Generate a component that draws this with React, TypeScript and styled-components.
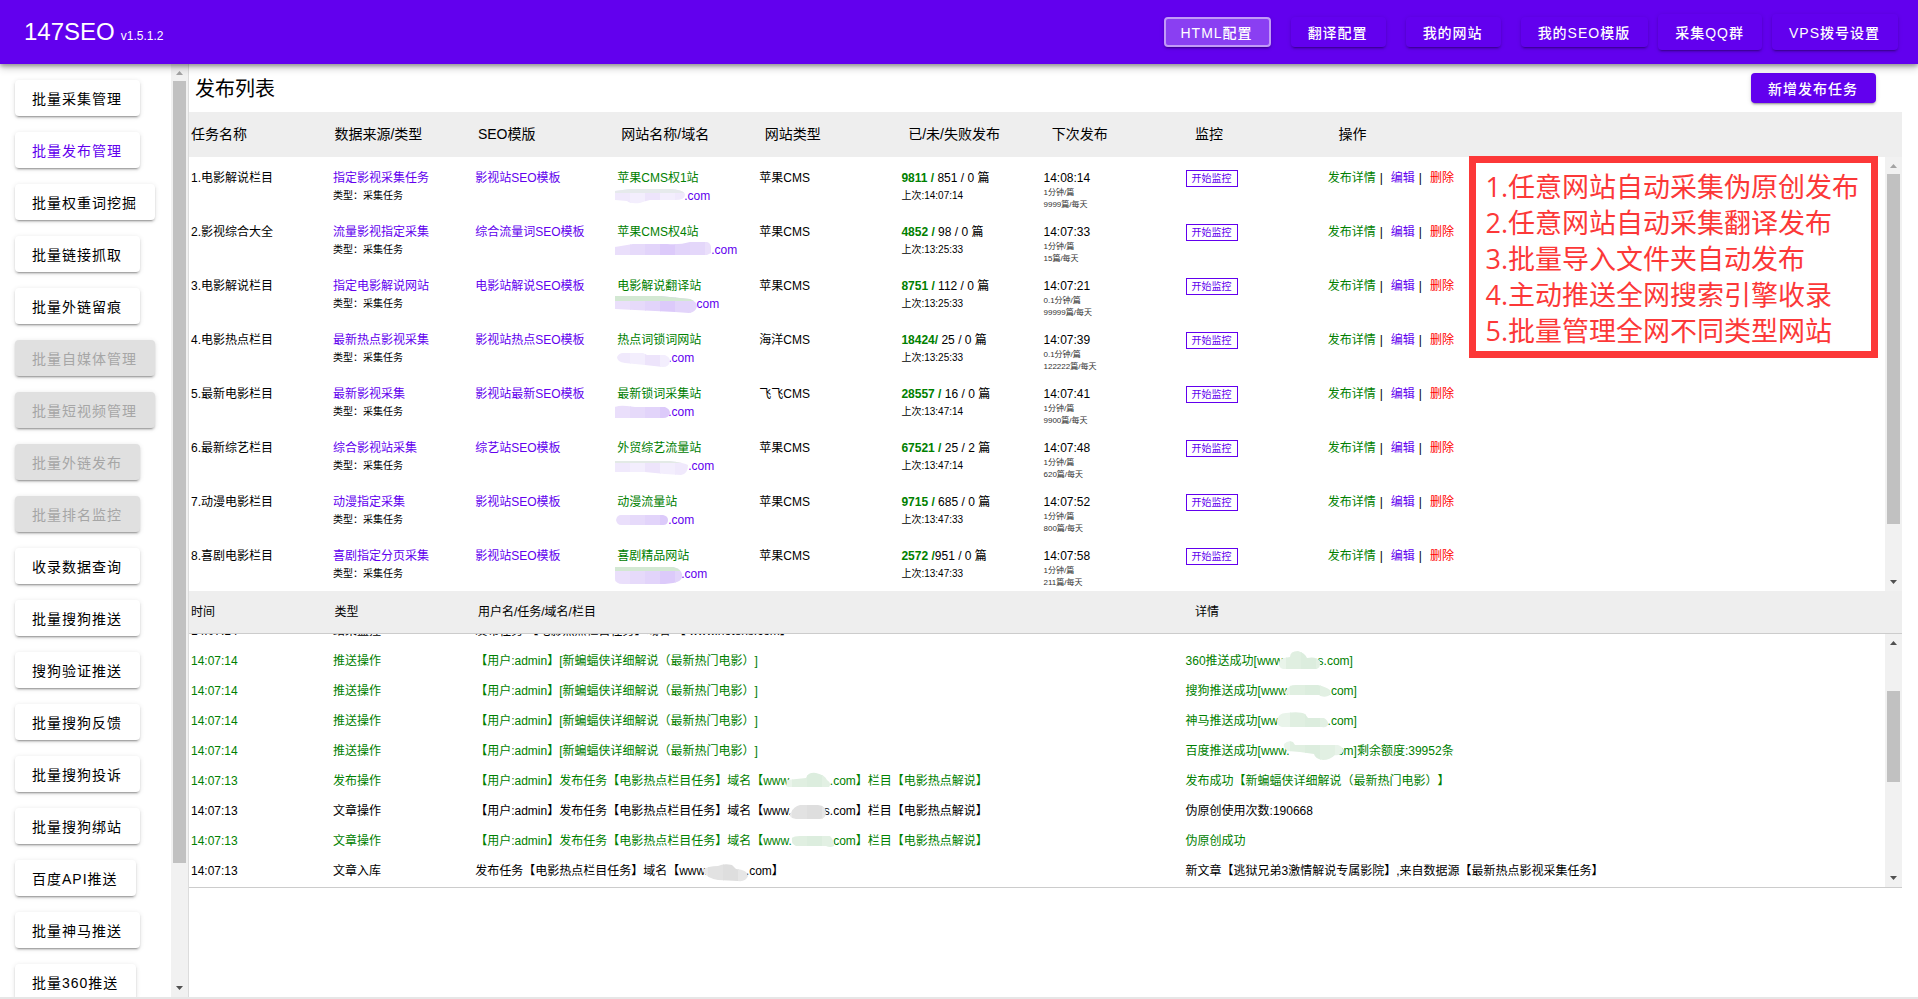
import React, { useId } from 'react';
import styled, { createGlobalStyle, css } from 'styled-components';

const purple = '#6200ee';
const green = '#008000';
const red = '#ff0000';

const GlobalStyle = createGlobalStyle`
  *, *::before, *::after { box-sizing: border-box; }
  body {
    margin: 0;
    background: #fff;
    color: #000;
    font-family: "Liberation Sans", "Noto Sans CJK SC", sans-serif;
    font-size: 12px;
    overflow: hidden;
    text-spacing-trim: space-all;
  }
  button { font-family: inherit; cursor: pointer; }
  a { color: inherit; text-decoration: none; }
`;

/* ---------- shell ---------- */

const Page = styled.div`
  display: flex;
  flex-direction: column;
  height: 100vh;
  border-bottom: 2px solid #e6e6e6;
`;

const TopBar = styled.header`
  display: flex;
  flex: none;
  align-items: center;
  justify-content: space-between;
  height: 64px;
  padding: 0 20px 0 24px;
  background: ${purple};
  color: #fff;
  box-shadow: 0 2px 4px rgba(0, 0, 0, 0.3), 0 4px 8px rgba(0, 0, 0, 0.2);
  z-index: 2;
`;

const Brand = styled.div`
  display: flex;
  align-items: baseline;
  gap: 6px;
  padding-top: 4px;
  font-size: 24px;
  line-height: 32px;
`;

const Version = styled.small`
  font-size: 12px;
`;

const TopNav = styled.nav`
  display: flex;
  align-items: center;
  gap: 20px;
`;

const TopNavEnd = styled.div`
  display: flex;
  align-items: center;
  gap: 10px;
`;

const raised = css`
  box-shadow: 0 3px 1px -2px rgba(0, 0, 0, 0.2), 0 2px 2px rgba(0, 0, 0, 0.14), 0 1px 5px rgba(0, 0, 0, 0.12);
`;

const FilledButton = styled.button<{ $tall?: boolean; $selected?: boolean }>`
  height: ${(p) => (p.$tall ? 36 : 30)}px;
  padding: ${(p) => (p.$selected ? '2px 16px 0 15px' : '2px 18px 0 17px')};
  border: ${(p) => (p.$selected ? '2px solid #c29af8' : '0')};
  border-radius: 4px;
  background: ${(p) => (p.$selected ? '#8a3ff2' : purple)};
  color: #fff;
  font-size: 14px;
  font-weight: 500;
  line-height: 20px;
  letter-spacing: 1px;
  white-space: nowrap;
  ${raised}
`;

const Columns = styled.div`
  display: flex;
  flex: 1;
  min-height: 0;
`;

/* ---------- sidebar ---------- */

const Sidebar = styled.aside`
  display: flex;
  flex: none;
  width: 189px;
  border-right: 1px solid #dcdcdc;
`;

const SideNav = styled.nav`
  display: flex;
  flex: 1;
  flex-direction: column;
  align-items: flex-start;
  gap: 16px;
  padding: 16px 0 0 15px;
  overflow: hidden;
`;

const SideButton = styled.button<{ $active?: boolean }>`
  flex: none;
  height: 36px;
  padding: 2px 18px 0 17px;
  border: 0;
  border-radius: 4px;
  background: #fff;
  color: ${(p) => (p.$active ? purple : '#000')};
  font-size: 14px;
  line-height: 20px;
  letter-spacing: 1px;
  white-space: nowrap;
  ${raised}

  &:disabled {
    background: #e0e0e0;
    color: #a6a6a6;
  }
`;

/* ---------- scroll bar ---------- */

const ScrollTrack = styled.div`
  display: flex;
  flex: none;
  flex-direction: column;
  align-items: center;
  width: 17px;
  background: #f1f1f1;
`;

const ScrollArrow = styled.svg`
  flex: none;
  width: 17px;
  height: 17px;
`;

const ScrollSpace = styled.div<{ $grow: number }>`
  flex: ${(p) => p.$grow} 1 0;
`;

const ScrollThumb = styled.div<{ $grow: number }>`
  flex: ${(p) => p.$grow} 1 0;
  width: 13px;
  background: #c1c1c1;
`;

type ScrollProps = { before: number; size: number; after: number };

function ScrollBar({ before, size, after }: ScrollProps) {
  return (
    <ScrollTrack aria-hidden="true">
      <ScrollArrow viewBox="0 0 17 17">
        <path d="M5 11 L8.5 7 L12 11Z" fill={before ? '#505050' : '#a3a3a3'} />
      </ScrollArrow>
      <ScrollSpace $grow={before} />
      <ScrollThumb $grow={size} />
      <ScrollSpace $grow={after} />
      <ScrollArrow viewBox="0 0 17 17">
        <path d="M5 6 L8.5 10 L12 6Z" fill="#505050" />
      </ScrollArrow>
    </ScrollTrack>
  );
}

/* ---------- content ---------- */

const Content = styled.main`
  position: relative;
  flex: 1;
  min-width: 0;
  padding-right: 16px;
`;

const TitleRow = styled.div`
  display: flex;
  align-items: center;
  justify-content: space-between;
  height: 48px;
  padding: 0 26px 0 6px;
`;

const Title = styled.h1`
  margin: 0;
  padding-top: 2px;
  font-size: 20px;
  font-weight: 400;
  line-height: 28px;
`;

const Panel = styled.section<{ $head: number; $body: number; $ruled?: boolean }>`
  display: grid;
  grid-template-columns: minmax(0, 1fr) 17px;
  grid-template-rows: ${(p) => p.$head}px ${(p) => p.$body}px;
  border-bottom: ${(p) => (p.$ruled ? '1px solid #ccc' : '0')};

  & > table {
    grid-area: 1 / 1 / 3 / 3;
  }
  & > div {
    grid-area: 2 / 2;
    z-index: 1;
  }
`;

const DataTable = styled.table`
  display: flex;
  flex-direction: column;
  min-height: 0;
`;

const TableHead = styled.thead<{ $log?: boolean }>`
  display: block;
  flex: none;
  background: #eee;
  font-size: ${(p) => (p.$log ? 12 : 14)}px;
  border-bottom: ${(p) => (p.$log ? '1px solid #ccc' : '0')};
`;

const HeadRow = styled.tr<{ $log?: boolean }>`
  display: grid;
  grid-template-columns: ${(p) => (p.$log ? '10fr 10fr 50fr 49fr' : 'repeat(8, 10fr) 39fr')};
  align-items: center;
  height: ${(p) => (p.$log ? 42 : 45)}px;
  padding: ${(p) => (p.$log ? '0 4px 0 2px' : '0 4px 2px 2px')};
`;

const HeadCell = styled.th`
  padding: 0;
  font-weight: 400;
  line-height: 20px;
  text-align: left;
  white-space: nowrap;
`;

const TaskBody = styled.tbody`
  display: block;
  flex: 1;
  min-height: 0;
  overflow: hidden;
`;

const TaskRow = styled.tr`
  display: grid;
  grid-template-columns: repeat(8, 1fr) 4fr;
  align-items: start;
  height: 54px;
  padding: 13px 6px 0 2px;
`;

const Cell = styled.td`
  padding: 0;
  line-height: 17px;
  white-space: nowrap;
`;

const PurpleLink = styled.a`
  color: ${purple};
`;

const GreenLink = styled.a`
  color: ${green};
`;

const RedLink = styled.a`
  color: ${red};
`;

const Published = styled.b`
  color: ${green};
`;

const SubLine = styled.div`
  font-size: 10px;
`;

const RateLine = styled.div`
  font-size: 8px;
  line-height: 12px;
  color: #333;
`;

const Domain = styled.a`
  display: flex;
  line-height: 18px;
  color: ${purple};
`;

const WatchButton = styled.button`
  display: block;
  height: 17px;
  padding: 0 5px;
  border: 1px solid ${purple};
  background: #fff;
  color: ${purple};
  font-size: 10px;
  line-height: 15px;
`;

const Divider = styled.span`
  padding: 0 8px 0 4px;
`;

const LogBody = styled.tbody`
  display: flex;
  flex: 1;
  flex-direction: column;
  justify-content: flex-end;
  min-height: 0;
  padding-bottom: 1px;
  overflow: hidden;
`;

const LogRow = styled.tr<{ $ok?: boolean }>`
  display: grid;
  flex: none;
  grid-template-columns: 1fr 1fr 5fr 5fr;
  padding: 0 6px 0 2px;
  color: ${(p) => (p.$ok ? green : '#000')};
`;

const LogCell = styled.td`
  padding: 0;
  line-height: 30px;
  white-space: pre;
`;

const Notice = styled.aside`
  position: absolute;
  top: 92px;
  right: 40px;
  padding: 6px 12px 2px 9px;
  border: 7px solid #fc3838;
  background: #fff;
  color: #fc3838;
  font-family: "Open Sans", "Noto Sans CJK SC", sans-serif;
  font-size: 27px;
  font-weight: 400;
  line-height: 36px;
  white-space: nowrap;
  z-index: 2;

  & > p {
    margin: 0;
  }
`;

/* ---------- smudges painted over the private part of a domain ---------- */

const SmudgeBox = styled.span<{ $width: number }>`
  position: relative;
  display: inline-block;
  width: ${(p) => p.$width}px;
  height: 18px;
  vertical-align: top;
`;

const SmudgeArt = styled.svg`
  position: absolute;
  top: 0;
  left: 0;
  width: 100px;
  height: 30px;
  overflow: visible;
`;

type Tone = 'violet' | 'pale' | 'green' | 'grey';

const tones: Record<Tone, string[]> = {
  violet: ['#eadffb', '#eadffb', '#e6dafa', '#e2d4fa', '#dccafa', '#e2d4fa', '#e4d7fa', '#eadffb'],
  pale: ['#ebe2fb', '#f0e9fc', '#f3eefd', '#ede4fb', '#f3eefd', '#f0e9fc', '#f3eefd', '#f3eefd'],
  green: ['#e9f4ea', '#e0efe1', '#dcedde', '#e2f0e3', '#e8f3e9', '#e2f0e4', '#e8f3e9', '#e8f3e9'],
  grey: ['#e9e9e9', '#e2e2e2', '#dedede', '#e6e6e6', '#ececec', '#e6e6e6', '#e9e9e9', '#e9e9e9'],
};

function Smudge({ width, d, tone, cap, shift = 0 }: { width: number; d: string; tone: Tone; cap?: string; shift?: number }) {
  const id = useId();
  return (
    <SmudgeBox $width={width} aria-hidden="true">
      <SmudgeArt viewBox="0 0 100 30">
        <clipPath id={id}>
          <path d={d} />
        </clipPath>
        <g transform={`translate(${shift} 0)`}>
          <g clipPath={`url(#${id})`}>
            {tones[tone].map((fill, i) => (
              <rect key={i} x={i * 15 - 15} y="0" width="16" height="30" fill={fill} />
            ))}
            {cap && <rect x="-15" y="0" width="120" height="6" fill={cap} />}
          </g>
        </g>
      </SmudgeArt>
    </SmudgeBox>
  );
}

/* ---------- data ---------- */

const sideItems: { label: string; active?: boolean; disabled?: boolean }[] = [
  { label: '批量采集管理' },
  { label: '批量发布管理', active: true },
  { label: '批量权重词挖掘' },
  { label: '批量链接抓取' },
  { label: '批量外链留痕' },
  { label: '批量自媒体管理', disabled: true },
  { label: '批量短视频管理', disabled: true },
  { label: '批量外链发布', disabled: true },
  { label: '批量排名监控', disabled: true },
  { label: '收录数据查询' },
  { label: '批量搜狗推送' },
  { label: '搜狗验证推送' },
  { label: '批量搜狗反馈' },
  { label: '批量搜狗投诉' },
  { label: '批量搜狗绑站' },
  { label: '百度API推送' },
  { label: '批量神马推送' },
  { label: '批量360推送' },
];

const taskHeads = ['任务名称', '数据来源/类型', 'SEO模版', '网站名称/域名', '网站类型', '已/未/失败发布', '下次发布', '监控', '操作'];

type Task = {
  name: string;
  source: string;
  template: string;
  site: string;
  cms: string;
  done: string;
  rest: string;
  last: string;
  next: string;
  rate: string;
  quota: string;
  domain: string;
  smudge: { width: number; d: string; tone: Tone; cap?: string };
};

const tasks: Task[] = [
  {
    name: '1.电影解说栏目', source: '指定影视采集任务', template: '影视站SEO模板', site: '苹果CMS权1站', cms: '苹果CMS',
    done: '9811 /', rest: ' 851 / 0 篇', last: '14:07:14', next: '14:08:14', rate: '1分钟/篇', quota: '9999篇/每天', domain: '.com',
    smudge: { width: 67, tone: 'pale', cap: '#e6eaec', d: 'M0 4 L15 2 H55 Q70 3 70 8 Q70 13 60 13 H35 Q30 14 25 16 Q15 17 12 14 L0 13Z' },
  },
  {
    name: '2.影视综合大全', source: '流量影视指定采集', template: '综合流量词SEO模板', site: '苹果CMS权4站', cms: '苹果CMS',
    done: '4852 /', rest: ' 98 / 0 篇', last: '13:25:33', next: '14:07:33', rate: '1分钟/篇', quota: '15篇/每天', domain: '.com',
    smudge: { width: 94, tone: 'violet', d: 'M0 6 L18 3 H52 Q65 4 75 1 H92 Q96 2 96 7 V12 L92 14 H0Z' },
  },
  {
    name: '3.电影解说栏目', source: '指定电影解说网站', template: '电影站解说SEO模板', site: '电影解说翻译站', cms: '苹果CMS',
    done: '8751 /', rest: ' 112 / 0 篇', last: '13:25:33', next: '14:07:21', rate: '0.1分钟/篇', quota: '99999篇/每天', domain: '.com',
    smudge: { width: 76, tone: 'violet', cap: '#d3e8d3', d: 'M0 1 H45 L75 4 Q82 7 82 11 Q81 17 74 18 L60 17 L40 16 L0 14Z' },
  },
  {
    name: '4.电影热点栏目', source: '最新热点影视采集', template: '影视站热点SEO模板', site: '热点词锁词网站', cms: '海洋CMS',
    done: '18424/', rest: ' 25 / 0 篇', last: '13:25:33', next: '14:07:39', rate: '0.1分钟/篇', quota: '122222篇/每天', domain: '.com',
    smudge: { width: 51, tone: 'pale', d: 'M2 8 Q4 4 8 4 H28 L32 6 H50 Q55 8 55 12 Q54 18 48 18 L30 16 L10 14 Q2 13 2 8Z' },
  },
  {
    name: '5.最新电影栏目', source: '最新影视采集', template: '影视站最新SEO模板', site: '最新锁词采集站', cms: '飞飞CMS',
    done: '28557 /', rest: ' 16 / 0 篇', last: '13:47:14', next: '14:07:41', rate: '1分钟/篇', quota: '9900篇/每天', domain: '.com',
    smudge: { width: 51, tone: 'violet', d: 'M0 4 Q5 2 12 3 L20 4 H50 Q55 6 55 10 Q54 15 48 15 H0Z' },
  },
  {
    name: '6.最新综艺栏目', source: '综合影视站采集', template: '综艺站SEO模板', site: '外贸综艺流量站', cms: '苹果CMS',
    done: '67521 /', rest: ' 25 / 2 篇', last: '13:47:14', next: '14:07:48', rate: '1分钟/篇', quota: '620篇/每天', domain: '.com',
    smudge: { width: 71, tone: 'pale', cap: '#e3eae6', d: 'M0 4 H30 L55 4 Q70 6 73 8 Q73 17 66 18 L50 17 L30 15 H0Z' },
  },
  {
    name: '7.动漫电影栏目', source: '动漫指定采集', template: '影视站SEO模板', site: '动漫流量站', cms: '苹果CMS',
    done: '9715 /', rest: ' 685 / 0 篇', last: '13:47:33', next: '14:07:52', rate: '1分钟/篇', quota: '800篇/每天', domain: '.com',
    smudge: { width: 51, tone: 'violet', d: 'M1 9 Q2 4 6 4 H48 Q53 5 53 9 Q53 14 48 14 H6 Q2 14 1 9Z' },
  },
  {
    name: '8.喜剧电影栏目', source: '喜剧指定分页采集', template: '影视站SEO模板', site: '喜剧精品网站', cms: '苹果CMS',
    done: '2572 /', rest: '951 / 0 篇', last: '13:47:33', next: '14:07:58', rate: '1分钟/篇', quota: '211篇/每天', domain: '.com',
    smudge: { width: 64, tone: 'violet', cap: '#d3e8d3', d: 'M0 2 L58 2 Q66 4 67 9 Q68 15 62 17 Q55 19 45 19 H8 Q0 19 0 13Z' },
  },
];

const logHeads = ['时间', '类型', '用户名/任务/域名/栏目', '详情'];

const pushed = '【用户:admin】[新蝙蝠侠详细解说（最新热门电影）]';
const userTask = '【用户:admin】发布任务【电影热点栏目任务】域名【www.';
const siteColumn = '.com】栏目【电影热点解说】';

type Log = { time: string; kind: string; ok?: boolean; subject: React.ReactNode; detail: React.ReactNode };

const logs: Log[] = [
  { time: '14:07:14', kind: '结果监控', subject: '发布任务 【电影热点栏目任务】域名 【 www.hotens.com】', detail: '' },
  {
    time: '14:07:14', kind: '推送操作', ok: true, subject: pushed,
    detail: <>360推送成功[www.<Smudge width={32} tone="green" d="M-7 18 Q-7 13 -2 12 L4 11 Q4 5 12 5 Q19 7 21 12 Q30 10 34 15 Q35 22 30 23 H-3 Q-7 22 -7 18Z" />s.com]</>,
  },
  {
    time: '14:07:14', kind: '推送操作', ok: true, subject: pushed,
    detail: <>搜狗推送成功[www.<Smudge width={38} tone="green" d="M-6 17 L0 10 Q2 9 6 9 H28 Q36 11 40 14 Q42 18 38 20 Q33 22 29 19 H-2Z" />.com]</>,
  },
  {
    time: '14:07:14', kind: '推送操作', ok: true, subject: pushed,
    detail: <>神马推送成功[www.<Smudge width={38} tone="green" d="M-13 15 Q-12 7 -4 7 Q10 5 15 8 L18 12 H34 Q39 15 38 19 Q36 22 32 21 H-8 Q-13 20 -13 15Z" />.com]</>,
  },
  {
    time: '14:07:14', kind: '推送操作', ok: true, subject: pushed,
    detail: <>百度推送成功[www.<Smudge width={38} tone="green" d="M-6 8 Q-2 4 3 6 L5 9 H48 Q54 11 53 16 Q50 20 45 19 Q40 24 33 24 Q25 23 24 18 L10 16 L-2 15 Q-7 12 -6 8Z" />.com]剩余额度:39952条</>,
  },
  {
    time: '14:07:13', kind: '发布操作', ok: true,
    subject: <>{userTask}<Smudge width={38} tone="green" d="M-6 20 L-5 14 L14 12 Q16 6 24 7 Q33 9 35 14 Q40 17 37 21 H-4Z" />{siteColumn}</>,
    detail: '发布成功【新蝙蝠侠详细解说（最新热门电影）】',
  },
  {
    time: '14:07:13', kind: '文章操作',
    subject: <>{userTask}<Smudge width={32} tone="grey" d="M-2 18 Q2 10 8 9 H26 Q34 10 34 16 Q34 23 28 23 H4 Q-3 22 -2 18Z" />s{siteColumn}</>,
    detail: '伪原创使用次数:190668',
  },
  {
    time: '14:07:13', kind: '文章操作', ok: true,
    subject: <>{userTask}<Smudge width={38} tone="green" d="M0 12 Q2 10 8 10 H38 Q42 14 42 20 Q38 22 34 20 H4 Q-1 18 0 12Z" />{siteColumn}</>,
    detail: '伪原创成功',
  },
  {
    time: '14:07:13', kind: '文章入库',
    subject: <>发布任务【电影热点栏目任务】域名【www.<Smudge width={38} tone="grey" d="M-6 14 Q0 10 10 10 Q16 7 24 9 L28 13 Q40 14 40 20 Q38 26 30 25 L10 24 Q-2 22 -6 14Z" />.com】</>,
    detail: '新文章【逃狱兄弟3激情解说专属影院】,来自数据源【最新热点影视采集任务】',
  },
];

const notices = [
  '1.任意网站自动采集伪原创发布',
  '2.任意网站自动采集翻译发布',
  '3.批量导入文件夹自动发布',
  '4.主动推送全网搜索引擎收录',
  '5.批量管理全网不同类型网站',
];

export default function App() {
  return (
    <Page>
      <GlobalStyle />
      <TopBar>
        <Brand>
          147SEO <Version>v1.5.1.2</Version>
        </Brand>
        <TopNav>
          <FilledButton $selected>HTML配置</FilledButton>
          <FilledButton>翻译配置</FilledButton>
          <FilledButton>我的网站</FilledButton>
          <TopNavEnd>
            <FilledButton>我的SEO模版</FilledButton>
            <FilledButton $tall>采集QQ群</FilledButton>
            <FilledButton $tall>VPS拨号设置</FilledButton>
          </TopNavEnd>
        </TopNav>
      </TopBar>
      <Columns>
        <Sidebar>
          <SideNav>
            {sideItems.map((item) => (
              <SideButton key={item.label} $active={item.active} disabled={item.disabled}>
                {item.label}
              </SideButton>
            ))}
          </SideNav>
          <ScrollBar before={0} size={782} after={117} />
        </Sidebar>
        <Content>
          <TitleRow>
            <Title>发布列表</Title>
            <FilledButton>新增发布任务</FilledButton>
          </TitleRow>
          <Panel $head={45} $body={434}>
            <DataTable>
              <TableHead>
                <HeadRow>
                  {taskHeads.map((h) => (
                    <HeadCell key={h} scope="col">{h}</HeadCell>
                  ))}
                </HeadRow>
              </TableHead>
              <TaskBody>
                {tasks.map((t) => (
                  <TaskRow key={t.name}>
                    <Cell>{t.name}</Cell>
                    <Cell>
                      <PurpleLink href="#source">{t.source}</PurpleLink>
                      <SubLine>类型：采集任务</SubLine>
                    </Cell>
                    <Cell>
                      <PurpleLink href="#template">{t.template}</PurpleLink>
                    </Cell>
                    <Cell>
                      <GreenLink href="#site">{t.site}</GreenLink>
                      <Domain href="#domain">
                        <Smudge {...t.smudge} shift={-2} />
                        {t.domain}
                      </Domain>
                    </Cell>
                    <Cell>{t.cms}</Cell>
                    <Cell>
                      <Published>{t.done}</Published>
                      {t.rest}
                      <SubLine>上次:{t.last}</SubLine>
                    </Cell>
                    <Cell>
                      {t.next}
                      <RateLine>{t.rate}</RateLine>
                      <RateLine>{t.quota}</RateLine>
                    </Cell>
                    <Cell>
                      <WatchButton>开始监控</WatchButton>
                    </Cell>
                    <Cell>
                      <GreenLink href="#detail">发布详情</GreenLink>
                      <Divider>|</Divider>
                      <PurpleLink href="#edit">编辑</PurpleLink>
                      <Divider>|</Divider>
                      <RedLink href="#delete">删除</RedLink>
                    </Cell>
                  </TaskRow>
                ))}
              </TaskBody>
            </DataTable>
            <ScrollBar before={0} size={350} after={50} />
          </Panel>
          <Panel $head={43} $body={253} $ruled>
            <DataTable>
              <TableHead $log>
                <HeadRow $log>
                  {logHeads.map((h) => (
                    <HeadCell key={h} scope="col">{h}</HeadCell>
                  ))}
                </HeadRow>
              </TableHead>
              <LogBody>
                {logs.map((l, i) => (
                  <LogRow key={i} $ok={l.ok}>
                    <LogCell>{l.time}</LogCell>
                    <LogCell>{l.kind}</LogCell>
                    <LogCell>{l.subject}</LogCell>
                    <LogCell>{l.detail}</LogCell>
                  </LogRow>
                ))}
              </LogBody>
            </DataTable>
            <ScrollBar before={40} size={91} after={88} />
          </Panel>
          <Notice>
            {notices.map((n) => (
              <p key={n}>{n}</p>
            ))}
          </Notice>
        </Content>
      </Columns>
    </Page>
  );
}
